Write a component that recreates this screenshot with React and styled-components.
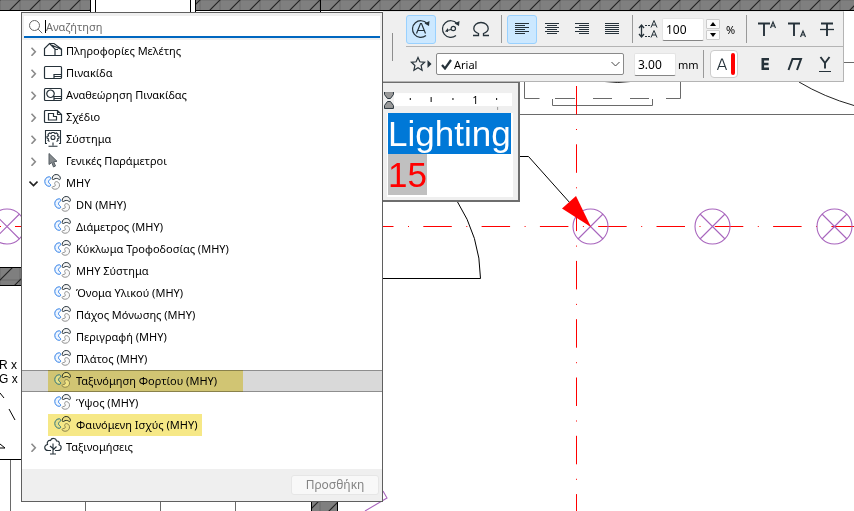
import React, { useState } from 'react'
import styled, { createGlobalStyle, css } from 'styled-components'

const GlobalStyle = createGlobalStyle`
    * {
        box-sizing: border-box;
    }
    body {
        margin: 0;
        background: #fff;
        font-family: 'Noto Sans', 'Open Sans', sans-serif;
        font-size: 11px;
        color: #000;
    }
    button, input, select {
        font: inherit;
        color: inherit;
    }
`

const Desktop = styled.main`
    position: relative;
    min-height: 100vh;
    overflow: hidden;
`

const Drawing = styled.svg`
    position: absolute;
    inset: 0;
    width: 100%;
    height: 100%;
`

const Windows = styled.div`
    position: relative;
    display: flex;
    align-items: flex-start;
    padding: 11px 10px 0 21px;
`

/* parameter palette */

const Palette = styled.section`
    flex: 0 0 362px;
    margin-top: 1px;
    background: #efefef;
    border: 1px solid #5f5f5f;
`

const SearchBox = styled.label`
    display: flex;
    align-items: center;
    gap: 2px;
    height: 22px;
    margin: 3px 2px 2px;
    padding-left: 4px;
    background: #fff;
    border-bottom: 2px solid #0067c0;
`

const SearchInput = styled.input`
    flex: 1;
    min-width: 0;
    border: none;
    outline: none;
    padding: 0;
    background: transparent;
    &::placeholder {
        color: #6b6b6b;
        opacity: 1;
    }
`

const Caret = styled.span`
    width: 1px;
    height: 13px;
    background: #000;
    margin-right: -2px;
`

const Tree = styled.ul`
    list-style: none;
    margin: 0;
    padding: 0 0 11px;
    background: #fff;
`

const TreeRow = styled.li`
    display: flex;
    align-items: center;
    height: 22px;
    padding-left: ${props => (props.$child ? '26px' : '4px')};
    ${props => props.$selected && css`
        background: #d9d9d9;
        box-shadow: inset 0 1px #8e8e8e, inset 0 -1px #8e8e8e;
    `}
`

const Toggle = styled.button`
    display: flex;
    align-items: center;
    justify-content: center;
    width: 15px;
    height: 22px;
    padding: 0;
    border: none;
    background: none;
`

const RowLabel = styled.span`
    position: relative;
    display: flex;
    align-items: center;
    gap: ${props => (props.$child ? '4px' : '3px')};
    height: 22px;
    padding: 0 0 2px ${props => (props.$child ? '6px' : '2px')};
    white-space: nowrap;
`

const Marker = styled.span`
    position: absolute;
    inset: 0 ${props => props.$extend}px 0 0;
    background: #f6e887;
    mix-blend-mode: multiply;
`

const PaletteFooter = styled.footer`
    display: flex;
    justify-content: flex-end;
    padding: 6px 3px;
`

const AddButton = styled.button`
    width: 88px;
    height: 20px;
    padding: 0;
    border: 1px solid #e6e6e6;
    border-radius: 3px;
    background: #f8f8f8;
    color: #848484;
    font-size: 12px;
    line-height: 18px;
`

/* text toolbar and editor */

const Side = styled.div`
    flex: 1;
    min-width: 0;
`

const Toolbar = styled.section`
    display: flex;
    background: #efefef;
    border: 1px solid #b4b4b4;
    border-left: none;
    border-top-color: #e2e2e2;
`

const Grip = styled.div`
    width: 1px;
    height: 28px;
    margin: 21px 13px 0 9px;
    background: #8e8e8e;
`

const ToolRows = styled.div`
    flex: 1;
    min-width: 0;
`

const ToolRow = styled.div`
    display: flex;
    align-items: center;
    height: 34px;
    padding-right: 3px;
    & + & {
        height: 35px;
        border-top: 1px solid #b4b4b4;
    }
`

const ToolButton = styled.button`
    flex: none;
    display: flex;
    align-items: center;
    justify-content: center;
    width: 30px;
    height: 29px;
    padding: 0;
    background: ${props => (props.$active ? '#cce8ff' : 'none')};
    border: 1px solid ${props => (props.$active ? '#99d1ff' : 'transparent')};
    border-radius: 3px;
`

const Divider = styled.div`
    flex: none;
    width: 1px;
    height: 28px;
    margin: 0 5px;
    background: #999;
`

const Field = styled.label`
    flex: none;
    display: flex;
    align-items: center;
    font-size: 12px;
`

const NumberInput = styled.input`
    width: 42px;
    height: 23px;
    margin: 0 2px 0 4px;
    padding: 0 3px;
    border: 1px solid #e4e4e4;
    border-bottom-color: #858585;
    border-radius: 2px;
    background: #fff;
`

const Spinner = styled.div`
    display: flex;
    flex-direction: column;
    gap: 1px;
`

const SpinButton = styled.button`
    display: flex;
    align-items: center;
    justify-content: center;
    width: 14px;
    height: 10px;
    padding: 0;
    border: 1px solid #ccc;
    border-radius: 1px;
    background: #fbfbfb;
`

const Unit = styled.span`
    width: ${props => props.$width}px;
    text-align: center;
    font-size: 11px;
`

const FontPicker = styled.label`
    position: relative;
    flex: 1;
    display: flex;
    align-items: center;
    margin-right: 6px;
`

const FontSelect = styled.select`
    width: 100%;
    height: 22px;
    padding: 0 17px;
    border: 1px solid #8a8a8a;
    border-radius: 2px;
    background: #fff;
    appearance: none;
`

const PickerIcon = styled.span`
    position: absolute;
    display: flex;
    pointer-events: none;
    ${props => (props.$end ? 'right: 4px;' : 'left: 5px;')}
`

const PenButton = styled.button`
    flex: none;
    display: flex;
    align-items: center;
    justify-content: space-between;
    width: 28px;
    height: 28px;
    margin: 0 12px 0 1px;
    padding: 0 2px 0 5px;
    border: 1px solid #ccc;
    border-radius: 4px;
    background: #fff;
`

const TextEditor = styled.section`
    width: 137px;
    padding: 9px 5px 3px 1px;
    background: #efefef;
    border: solid #6e6e6e;
    border-width: 1px 2px 2px 0;
`

const Ruler = styled.div`
    display: flex;
    height: 21px;
`

const TextArea = styled.div`
    height: 84px;
    margin-left: 3px;
    padding: 0 1px;
    background: #fff;
    outline: none;
    font-family: 'Liberation Sans', Arial, sans-serif;
    font-size: 35px;
    line-height: 41px;
`

const TextRun = styled.span`
    display: table;
    color: ${props => props.$color};
    background: ${props => props.$background};
`

const ink = '#26323a'

const MepIcon = () => (
    <svg width="18" height="18" viewBox="0 0 18 18" fill="none">
        <path
            d="M5 3.8C2.300 4 .7 6.200.8 8.600c.1 2.700 1.900 4.600 4.300 4.700 1.500 0 2-1 1.300-1.900C5.700 10.500 4.400 9.800 4.500 8.500c.1-1.200 1.900-1.800 2.100-3.100C6.700 4.400 6.100 3.700 5 3.800Z"
            stroke="#2f7fe8"
            fill="#edf5ff"
        />
        <path
            d="M8.200 5.600C8.200 3.200 9.900 1.500 12.200 1.500s4.200 1.600 4.200 4.100c0 1-1 1.300-1.700.6-1-1-3.600-1-4.700 0-.8.7-1.800.4-1.800-.6Z"
            stroke={ink}
            fill="#f2f2f2"
        />
        <path
            d="M11 9.300c.8-1 2-.9 3.100-.1 1.600 1.200 1.900 3.700.7 5.300-1.300 1.900-4.400 2.300-6.200 1-.9-.7-.5-1.800.5-1.900 1.800-.1 2.700-1 2-2.100-.5-.7-.7-1.500-.1-2.200Z"
            stroke="#909090"
            fill="#fafafa"
        />
    </svg>
)

const icons = {
    project: (
        <svg width="20" height="18" viewBox="0 0 20 18" fill="none" stroke={ink} strokeWidth="1.2">
            <path d="M1.5 14.5V7.5L6.5 2.5 12 8v6.500ZM6.500 2.500h4.500l7.500 5.500v6.500H12M8.500 4l10 4.500M12 8.500h3" />
        </svg>
    ),
    layout: (
        <svg width="20" height="18" viewBox="0 0 20 18" fill="none" stroke={ink} strokeWidth="1.2">
            <rect x="1.5" y="3.5" width="17" height="12" rx="1" />
            <path d="M11 15.500v-4h7.500M11 13.500h7.500" />
        </svg>
    ),
    revision: (
        <svg width="20" height="18" viewBox="0 0 20 18" fill="none" stroke={ink} strokeWidth="1.2">
            <rect x="1.5" y="3.5" width="17" height="12" rx="1" />
            <path d="M5 6q2.500-2 5 0 2.500 2.500 0 5.500-2.500 2-5 0-2.500-3 0-5.500ZM11 15.500v-4h7.500M11 13.500h7.500" />
        </svg>
    ),
    sheet: (
        <svg width="20" height="18" viewBox="0 0 20 18" fill="none" stroke={ink} strokeWidth="1.2">
            <path d="M2.500 3.500h12l4 4v8h-16a1 1 0 0 1-1-1v-10a1 1 0 0 1 1-1ZM14.500 3.500v4h4M5.500 6.500h5v3h3v3.500h-8Z" />
        </svg>
    ),
    system: (
        <svg width="20" height="18" viewBox="0 0 20 18" fill="none" stroke={ink} strokeWidth="1.1">
            <path d="M4 14.500H2.500v-13h15v13H16M10 13.500v3M5.500 17.300h9" />
            <circle cx="10" cy="8.5" r="2" />
            <path d="M6.500 12.500 5 11.500l.5-1.500L4 9V7.500l1.500-.5L5 5.500l1.500-1.500 1.500.500 1-1h2l1 1 1.500-.5L15 5.500 14.500 7l1.500.5V9l-1.500 1 .5 1.500-1.500 1" />
        </svg>
    ),
    pointer: (
        <svg width="20" height="18" viewBox="0 0 20 18">
            <path d="M6 2.500v11l2.800-2 1.700 4.500 2-1-1.800-4.200 3.300-.5Z" fill="#868b8e" stroke="#555d63" />
        </svg>
    ),
    mep: (
        <svg width="20" height="18" viewBox="-1 0 20 18">
            <MepIcon />
        </svg>
    ),
    tree: (
        <svg width="20" height="18" viewBox="0 0 20 18" fill="none" stroke={ink} strokeWidth="1.1">
            <path d="M8 13.500H5C1 13.500.5 8.500 4.500 7.500 3.500 5 5.500 3 7.500 3.500 8.500.5 13 .8 13.500 4c2.500-.3 3.500 2 2.500 3.800 3.500 1.200 2.500 5.700-1 5.700h-3M10 17V6.500M10 13l3.500-3.500M10 11.500 7 9M7 17h6" />
        </svg>
    ),
}

const groups = [
    { icon: 'project', name: 'Πληροφορίες Μελέτης' },
    { icon: 'layout', name: 'Πινακίδα' },
    { icon: 'revision', name: 'Αναθεώρηση Πινακίδας' },
    { icon: 'sheet', name: 'Σχέδιο' },
    { icon: 'system', name: 'Σύστημα' },
    { icon: 'pointer', name: 'Γενικές Παράμετροι' },
    {
        icon: 'mep',
        name: 'ΜΗΥ',
        open: true,
        items: [
            { name: 'DN (MHY)' },
            { name: 'Διάμετρος (MHY)' },
            { name: 'Κύκλωμα Τροφοδοσίας (MHY)' },
            { name: 'ΜΗΥ Σύστημα' },
            { name: 'Όνομα Υλικού (MHY)' },
            { name: 'Πάχος Μόνωσης (MHY)' },
            { name: 'Περιγραφή (MHY)' },
            { name: 'Πλάτος (MHY)' },
            { name: 'Ταξινόμηση Φορτίου (MHY)', mark: -26 },
            { name: 'Ύψος (MHY)' },
            { name: 'Φαινόμενη Ισχύς (MHY)', mark: -4 },
        ],
    },
    { icon: 'tree', name: 'Ταξινομήσεις' },
]

const Chevron = ({ open }) => (
    <svg width="9" height="9" viewBox="0 0 9 9" fill="none" strokeWidth="1.6" stroke={open ? '#222' : '#8a8a8a'}>
        <path d={open ? 'M.5 2.5 4.5 6.5 8.5 2.5' : 'M2.5.8 6.3 4.8 2.5 8.8'} />
    </svg>
)

const AlignIcon = ({ type }) => {
    const shift = { left: 0, center: 2, right: 4, justify: 0 }[type]
    const short = type === 'justify' ? 14 : 10
    return (
        <svg width="14" height="12" viewBox="0 0 14 12" stroke={ink}>
            {[0, 1, 2, 3, 4, 5].map(i => {
                const x = i % 2 ? shift : 0
                return <path key={i} d={`M${x} ${i * 2 + 0.5}h${i % 2 ? short : 14}`} />
            })}
        </svg>
    )
}

function FloorPlan() {
    return (
        <Drawing fill="none" stroke="#6a6a6a">
            <defs>
                <pattern id="hatch" width="20" height="20" patternUnits="userSpaceOnUse">
                    <rect width="20" height="20" fill="#7f7f7f" />
                    <path d="M-2 22 22-2M-2 2 2-2M18 22l4-4" stroke="#222" strokeWidth="1.2" />
                </pattern>
            </defs>

            <g fill="url(#hatch)" stroke="none">
                <rect width="90" height="10" />
                <rect x="196" width="100%" height="10" />
                <rect y="267" width="22" height="18" />
                <rect x="311" y="500" width="27" height="11" />
            </g>
            <path
                d="M0 10.500h91M195 10.500h659M90.500 0v12M95.500 0v12M190.500 0v12M195.500 0v12M320.500 0v12M0 267.500h22M0 285.500h22M311.500 500v11M337.500 500v11"
                stroke="#000"
            />

            <path d="M844 62.500h10M520 114.500h334M524.500 82v16.500h15M555 98.500h20M593 98.500h19M630 98.500h19M666 98.500h14.500V82M552.500 99v6.500h100V99" />
            <path d="M799 82q25 15 55 23.500M598 81q20 3 39 0" stroke="#222" />
            <path d="M457 201q23 36 23.500 77.500H383" stroke="#000" />

            <path d="M0 459.500h21" stroke="#000" />
            <path d="M10.500 460v51M85.500 500v11M160.500 500v11M235.500 500v11" />
            <path d="m0 393 4 5M9 409l6 11M0 444l5 4H0" stroke="#000" />
            <g fill="#000" stroke="none" fontFamily="Liberation Sans" fontSize="12">
                <text x="-1" y="369">R x</text>
                <text x="-1" y="383">G x</text>
            </g>

            <g stroke="#f00">
                <path d="M365 226.500h489" strokeDasharray="28.5 14.5 1 14.3" />
                <path d="M576.500 86v440" strokeDasharray="28.5 14.5 1 14.3" />
                <path d="M0 226.500h1M15 226.500h6" />
            </g>
            <g stroke="#a865bd" strokeWidth="1.1">
                {[7, 590.5, 712.5, 834.5].map(x => (
                    <path
                        key={x}
                        d={`M${x - 17.5} 226.500a17.500 17.500 0 1 0 35 0a17.500 17.500 0 1 0-35 0M${x - 12} 214.500l24 24M${x + 12} 214.500l-24 24`}
                    />
                ))}
                <path d="m383 491 4 7-22 13" />
            </g>
            <path d="M520 156.500h8.500l42 47" stroke="#000" />
            <path d="m591 227-15-31-14 12.500Z" fill="#f00" stroke="none" />
        </Drawing>
    )
}

function ParameterPalette() {
    const [selected, setSelected] = useState('Ταξινόμηση Φορτίου (MHY)')

    return (
        <Palette>
            <SearchBox>
                <svg width="15" height="15" viewBox="0 0 15 15" fill="none" stroke="#666">
                    <circle cx="6.5" cy="6.5" r="5" />
                    <path d="m10.200 10.200 4 4" />
                </svg>
                <Caret />
                <SearchInput type="text" placeholder="Αναζήτηση" aria-label="Αναζήτηση" />
            </SearchBox>
            <Tree>
                {groups.map(group => (
                    <React.Fragment key={group.name}>
                        <TreeRow>
                            <Toggle aria-label={group.name}>
                                <Chevron open={group.open} />
                            </Toggle>
                            <RowLabel>
                                {icons[group.icon]}
                                {group.name}
                            </RowLabel>
                        </TreeRow>
                        {group.items && group.items.map(item => (
                            <TreeRow
                                key={item.name}
                                $child
                                $selected={item.name === selected}
                                onClick={() => setSelected(item.name)}
                            >
                                <RowLabel $child>
                                    <MepIcon />
                                    {item.name}
                                    {item.mark && <Marker $extend={item.mark} />}
                                </RowLabel>
                            </TreeRow>
                        ))}
                    </React.Fragment>
                ))}
            </Tree>
            <PaletteFooter>
                <AddButton>Προσθήκη</AddButton>
            </PaletteFooter>
        </Palette>
    )
}

function TextToolbar() {
    return (
        <Toolbar>
            <Grip />
            <ToolRows>
                <ToolRow>
                    <ToolButton $active aria-label="Readable text">
                        <svg width="20" height="20" viewBox="0 0 20 20" fill="none" stroke={ink} strokeWidth="1.2">
                            <path d="M16 4.500A8.300 8.300 0 1 0 15 16.500M5.500 14.500l4-10h1l4 10M7 11.500h6" />
                            <path d="m18.500 2-.5 5-4.500-2.500Z" fill={ink} stroke="none" />
                        </svg>
                    </ToolButton>
                    <ToolButton aria-label="Rotate text">
                        <svg width="20" height="20" viewBox="0 0 20 20" fill="none" stroke={ink} strokeWidth="1.2">
                            <path d="M16 4.500A8.300 8.300 0 1 0 15 16.500M6 11.500l4-1" />
                            <circle cx="12.3" cy="9.5" r="2.2" />
                            <path d="m18.500 2-.5 5-4.500-2.500ZM4 12.500 7 9v4Z" fill={ink} stroke="none" />
                        </svg>
                    </ToolButton>
                    <ToolButton aria-label="Symbol">
                        <svg width="18" height="16" viewBox="0 0 18 16" fill="none" stroke={ink} strokeWidth="1.3">
                            <path d="M1 14.500h5.500v-2C3.500 11.500 1.800 9.800 1.800 7.500 1.800 4 4.800 1.500 9 1.500s7.200 2.500 7.200 6c0 2.300-1.700 4-4.700 5v2H17" />
                        </svg>
                    </ToolButton>
                    <Divider />
                    <ToolButton $active aria-label="Align left"><AlignIcon type="left" /></ToolButton>
                    <ToolButton aria-label="Align center"><AlignIcon type="center" /></ToolButton>
                    <ToolButton aria-label="Align right"><AlignIcon type="right" /></ToolButton>
                    <ToolButton aria-label="Justify"><AlignIcon type="justify" /></ToolButton>
                    <Divider />
                    <Field>
                        <svg width="20" height="20" viewBox="0 0 20 20" fill="none" stroke={ink}>
                            <path d="M3.500 7v10M1 9l2.500-3L6 9M1 15l2.500 3L6 15" strokeWidth="1.3" />
                            <path d="M7 6.500h5M7 17.500h5" strokeDasharray="2 1" />
                            <path d="m13 8.500 3-7 3 7M14 6h4M13 18.500l3-7 3 7M14 16h4" />
                        </svg>
                        <NumberInput type="text" defaultValue="100" aria-label="Leading" />
                        <Spinner>
                            <SpinButton aria-label="Increase">
                                <svg width="6" height="4"><path d="M0 4 3 0l3 4Z" /></svg>
                            </SpinButton>
                            <SpinButton aria-label="Decrease">
                                <svg width="6" height="4"><path d="m0 0 3 4 3-4Z" /></svg>
                            </SpinButton>
                        </Spinner>
                        <Unit $width={21}>%</Unit>
                    </Field>
                    <Divider />
                    <ToolButton aria-label="Superscript">
                        <svg width="20" height="18" viewBox="0 0 20 18" fill="none" stroke={ink}>
                            <path d="M1 3.500h12M7 3.500V16" strokeWidth="1.9" />
                            <path d="m13.500 8 2.500-6 2.500 6M14.500 6h3" strokeWidth="1.2" />
                        </svg>
                    </ToolButton>
                    <ToolButton aria-label="Subscript">
                        <svg width="20" height="18" viewBox="0 0 20 18" fill="none" stroke={ink}>
                            <path d="M1 3.500h12M7 3.500V16" strokeWidth="1.9" />
                            <path d="m13.500 17 2.500-6 2.500 6M14.500 15h3" strokeWidth="1.2" />
                        </svg>
                    </ToolButton>
                    <ToolButton aria-label="Strikethrough">
                        <svg width="16" height="18" viewBox="0 0 16 18" fill="none" stroke={ink}>
                            <path d="M2 3.500h12M8 3.500V16" strokeWidth="1.9" />
                            <path d="M1 9.500h14" strokeWidth="1.3" />
                        </svg>
                    </ToolButton>
                </ToolRow>
                <ToolRow>
                    <ToolButton aria-label="Favorites">
                        <svg width="22" height="16" viewBox="0 0 22 16" fill="none" stroke={ink} strokeWidth="1.2">
                            <path d="m8 1.500 1.900 4.300 4.700.5-3.500 3.200 1 4.700L8 11.800l-4.100 2.400 1-4.700L1.400 6.300l4.700-.5Z" />
                            <path d="M17.500 4v8l4-4Z" fill={ink} stroke="none" />
                        </svg>
                    </ToolButton>
                    <FontPicker>
                        <FontSelect aria-label="Font" defaultValue="Arial">
                            <option>Arial</option>
                            <option>Calibri</option>
                            <option>Verdana</option>
                        </FontSelect>
                        <PickerIcon>
                            <svg width="11" height="11" viewBox="0 0 11 11" fill="none" stroke={ink} strokeWidth="2.2">
                                <path d="m1 6 3 3.500L10 1" />
                            </svg>
                        </PickerIcon>
                        <PickerIcon $end>
                            <svg width="9" height="6" viewBox="0 0 9 6" fill="none" stroke="#444">
                                <path d="m.5 1 4 4 4-4" />
                            </svg>
                        </PickerIcon>
                    </FontPicker>
                    <Field>
                        <NumberInput type="text" defaultValue="3.00" aria-label="Text height" />
                        <Unit $width={20}>mm</Unit>
                    </Field>
                    <Divider />
                    <PenButton aria-label="Pen color">
                        <svg width="12" height="12" viewBox="0 0 12 12" fill="none" stroke={ink} strokeWidth="1.1">
                            <path d="M1.500 12 5.600 1h.8l4.100 11M3 8.500h6" />
                        </svg>
                        <svg width="4" height="22"><rect width="4" height="22" rx="2" fill="#f00" /></svg>
                    </PenButton>
                    <ToolButton aria-label="Bold">
                        <svg width="10" height="14" viewBox="0 0 10 14" fill="none" stroke={ink} strokeWidth="2.6">
                            <path d="M9 2.300H2.800v9.400H9M3 7h5.500" />
                        </svg>
                    </ToolButton>
                    <ToolButton aria-label="Italic">
                        <svg width="16" height="14" viewBox="0 0 16 14" fill="none" stroke={ink} strokeWidth="2">
                            <path d="M1.500 13 5.500 2H14l-4 11" />
                        </svg>
                    </ToolButton>
                    <ToolButton aria-label="Underline">
                        <svg width="14" height="16" viewBox="0 0 14 16" fill="none" stroke={ink}>
                            <path d="M2.500 1 7 7l4.500-6M7 6.500v6" strokeWidth="1.9" />
                            <path d="M1 15.500h12" />
                        </svg>
                    </ToolButton>
                </ToolRow>
            </ToolRows>
        </Toolbar>
    )
}

function App() {
    return (
        <>
            <GlobalStyle />
            <Desktop>
                <FloorPlan />
                <Windows>
                    <ParameterPalette />
                    <Side>
                        <TextToolbar />
                        <TextEditor>
                            <Ruler>
                                <svg width="130" height="20" viewBox="0 0 130 20">
                                    <rect x="10" y="1" width="119" height="13" fill="#fff" />
                                    <path d="M.5-.5h9v3l-3 4h-3l-3-4ZM.5 16.500h9v-3l-3-4h-3l-3 4Z" fill="#999" stroke={ink} />
                                    <path d="M26.500 6v2M47.500 5v5M69.500 6v2M113.500 6v2" stroke="#000" />
                                    <path d="M114.500 15v3" stroke="#999" />
                                    <text x="89" y="12" fontSize="11">1</text>
                                </svg>
                            </Ruler>
                            <TextArea
                                contentEditable
                                suppressContentEditableWarning
                                role="textbox"
                                aria-label="Text"
                                spellCheck={false}
                            >
                                <TextRun $color="#fff" $background="#0078d7">Lighting</TextRun>
                                <TextRun $color="#f00" $background="#c0c0c0">15</TextRun>
                            </TextArea>
                        </TextEditor>
                    </Side>
                </Windows>
            </Desktop>
        </>
    )
}

export default App
